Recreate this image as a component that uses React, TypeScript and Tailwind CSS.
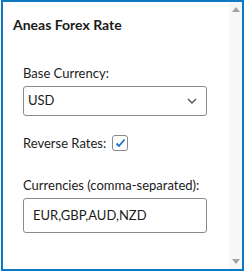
import React from "react";

export default function App() {
  return (
    <div className="w-[247px] h-[273px] bg-white" style={{ fontFamily: 'Lato, "Noto Sans", sans-serif' }}>
      <div className="ml-[1px] w-[243px] h-[271px] border-2 border-[#0b79c3] flex">
        <div className="flex-1 min-w-0 text-[#1b1b1b] whitespace-nowrap">
          <div className="pl-[10px] pt-[13px] text-[14px] leading-[20px] font-bold">Aneas Forex Rate</div>
          <div className="pl-[20px] pt-[29px] text-[13px]">
            <div className="leading-[18px]">Base Currency:</div>
            <div className="mt-[4px] w-[184px] h-[30px] border border-[#8a8a8a] rounded-[3px] flex items-center justify-between pl-[4px] pr-[9px]">
              <span>USD</span>
              <svg width="10" height="6" viewBox="0 0 10 6" fill="none">
                <path d="M1 1 L5 5 L9 1" stroke="#555" strokeWidth="1.4" />
              </svg>
            </div>
            <div className="mt-[18px] flex items-center gap-[6px] leading-[18px]">
              <span>Reverse Rates:</span>
              <span className="w-[16px] h-[16px] border border-[#8a8a8a] rounded-[3px] flex items-center justify-center">
                <svg width="11" height="10" viewBox="0 0 11 10" fill="none">
                  <path d="M1.5 5.5 L4 8 L9.5 1.5" stroke="#1a73c8" strokeWidth="1.8" />
                </svg>
              </span>
            </div>
            <div className="mt-[24px] leading-[18px]">Currencies (comma-separated):</div>
            <div className="mt-[4px] w-[184px] h-[35px] border border-[#8a8a8a] rounded-[3px] flex items-center pl-[9px]">
              EUR,GBP,AUD,NZD
            </div>
          </div>
        </div>
        <div className="w-[13px] bg-[#f7f7f7] flex flex-col justify-between items-center py-[5px]">
          <svg width="8" height="5" viewBox="0 0 8 5"><path d="M0 5 L4 0 L8 5 Z" fill="#a3a3a3" /></svg>
          <svg width="8" height="5" viewBox="0 0 8 5"><path d="M0 0 L4 5 L8 0 Z" fill="#a3a3a3" /></svg>
        </div>
      </div>
    </div>
  );
}
